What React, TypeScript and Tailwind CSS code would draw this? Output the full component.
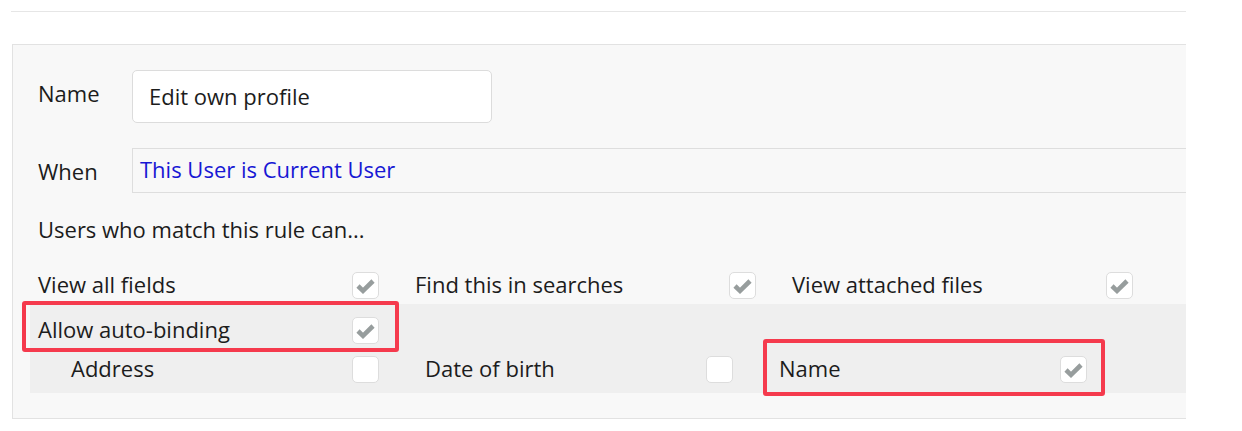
import React from "react";

function Check({ checked }: { checked: boolean }) {
  return (
    <div className="w-[27px] h-[27px] shrink-0 rounded-[5px] border border-[#dddddd] bg-white flex items-center justify-center">
      {checked && (
        <svg width="19" height="15" viewBox="0 0 19 15" className="mt-[2px]">
          <polyline
            points="2,7 7,11.8 17,2"
            fill="none"
            stroke="#979d9d"
            strokeWidth="4.6"
            strokeLinejoin="miter"
          />
        </svg>
      )}
    </div>
  );
}

function TopCol({ label, checked }: { label: string; checked: boolean }) {
  return (
    <div className="w-[377px] shrink-0 flex items-center">
      <div className="w-[314px] shrink-0 pb-[3px]">{label}</div>
      <Check checked={checked} />
    </div>
  );
}

function SubCol({ label, checked }: { label: string; checked: boolean }) {
  return (
    <div className="w-[354px] shrink-0 flex items-center">
      <div className="w-[281px] shrink-0 pb-[3px]">{label}</div>
      <Check checked={checked} />
    </div>
  );
}

export default function App() {
  return (
    <div className="relative w-[1242px] h-[431px] overflow-hidden bg-white font-['Open_Sans',sans-serif] text-[22px] leading-[28px] text-[#1c1c1c]">
      <div className="pt-[11px] pl-[11px]">
        <div className="w-[1175px] h-px bg-[#e6e6e6]" />
      </div>
      <div className="ml-[12px] mt-[32px] w-[1174px] h-[375px] overflow-hidden border-t border-l border-b border-[#e2e2e2] bg-[#f8f8f8] flex flex-col pt-[25px] pl-[25px]">
        <div className="flex items-center h-[53px]">
          <div className="w-[94px] shrink-0 pb-[8px]">Name</div>
          <div className="w-[360px] h-[53px] rounded-[5px] border border-[#dcdcdc] bg-white pl-[16px] pb-[2px] flex items-center">
            Edit own profile
          </div>
        </div>
        <div className="flex items-center h-[45px] mt-[25px]">
          <div className="w-[94px] shrink-0">When</div>
          <div className="flex-1 h-[45px] border-t border-l border-b border-[#dedede] bg-[#f8f8f8] pl-[7px] pb-[3px] flex items-center text-[#1717d4]">
            This User is Current User
          </div>
        </div>
        <div className="mt-[22px]">Users who match this rule can...</div>
        <div className="mt-[29px] flex h-[27px] items-center">
          <TopCol label="View all fields" checked />
          <TopCol label="Find this in searches" checked />
          <TopCol label="View attached files" checked />
        </div>
        <div className="mt-[5px] -ml-[8px] pl-[8px] bg-[#efefef] pt-[13px] pb-[11px]">
          <div className="flex h-[26px] items-center">
            <div className="w-[314px] shrink-0 pb-[3px]">Allow auto-binding</div>
            <Check checked />
          </div>
          <div className="mt-[13px] flex h-[26px] items-center pl-[33px]">
            <SubCol label="Address" checked={false} />
            <SubCol label="Date of birth" checked={false} />
            <SubCol label="Name" checked />
          </div>
        </div>
      </div>
      <div className="absolute left-[22px] top-[301px] w-[377px] h-[51px] border-[4px] border-[#f53a4d] rounded-[3px]" />
      <div className="absolute left-[763px] top-[339px] w-[342px] h-[57px] border-[4px] border-[#f53a4d] rounded-[3px]" />
    </div>
  );
}
